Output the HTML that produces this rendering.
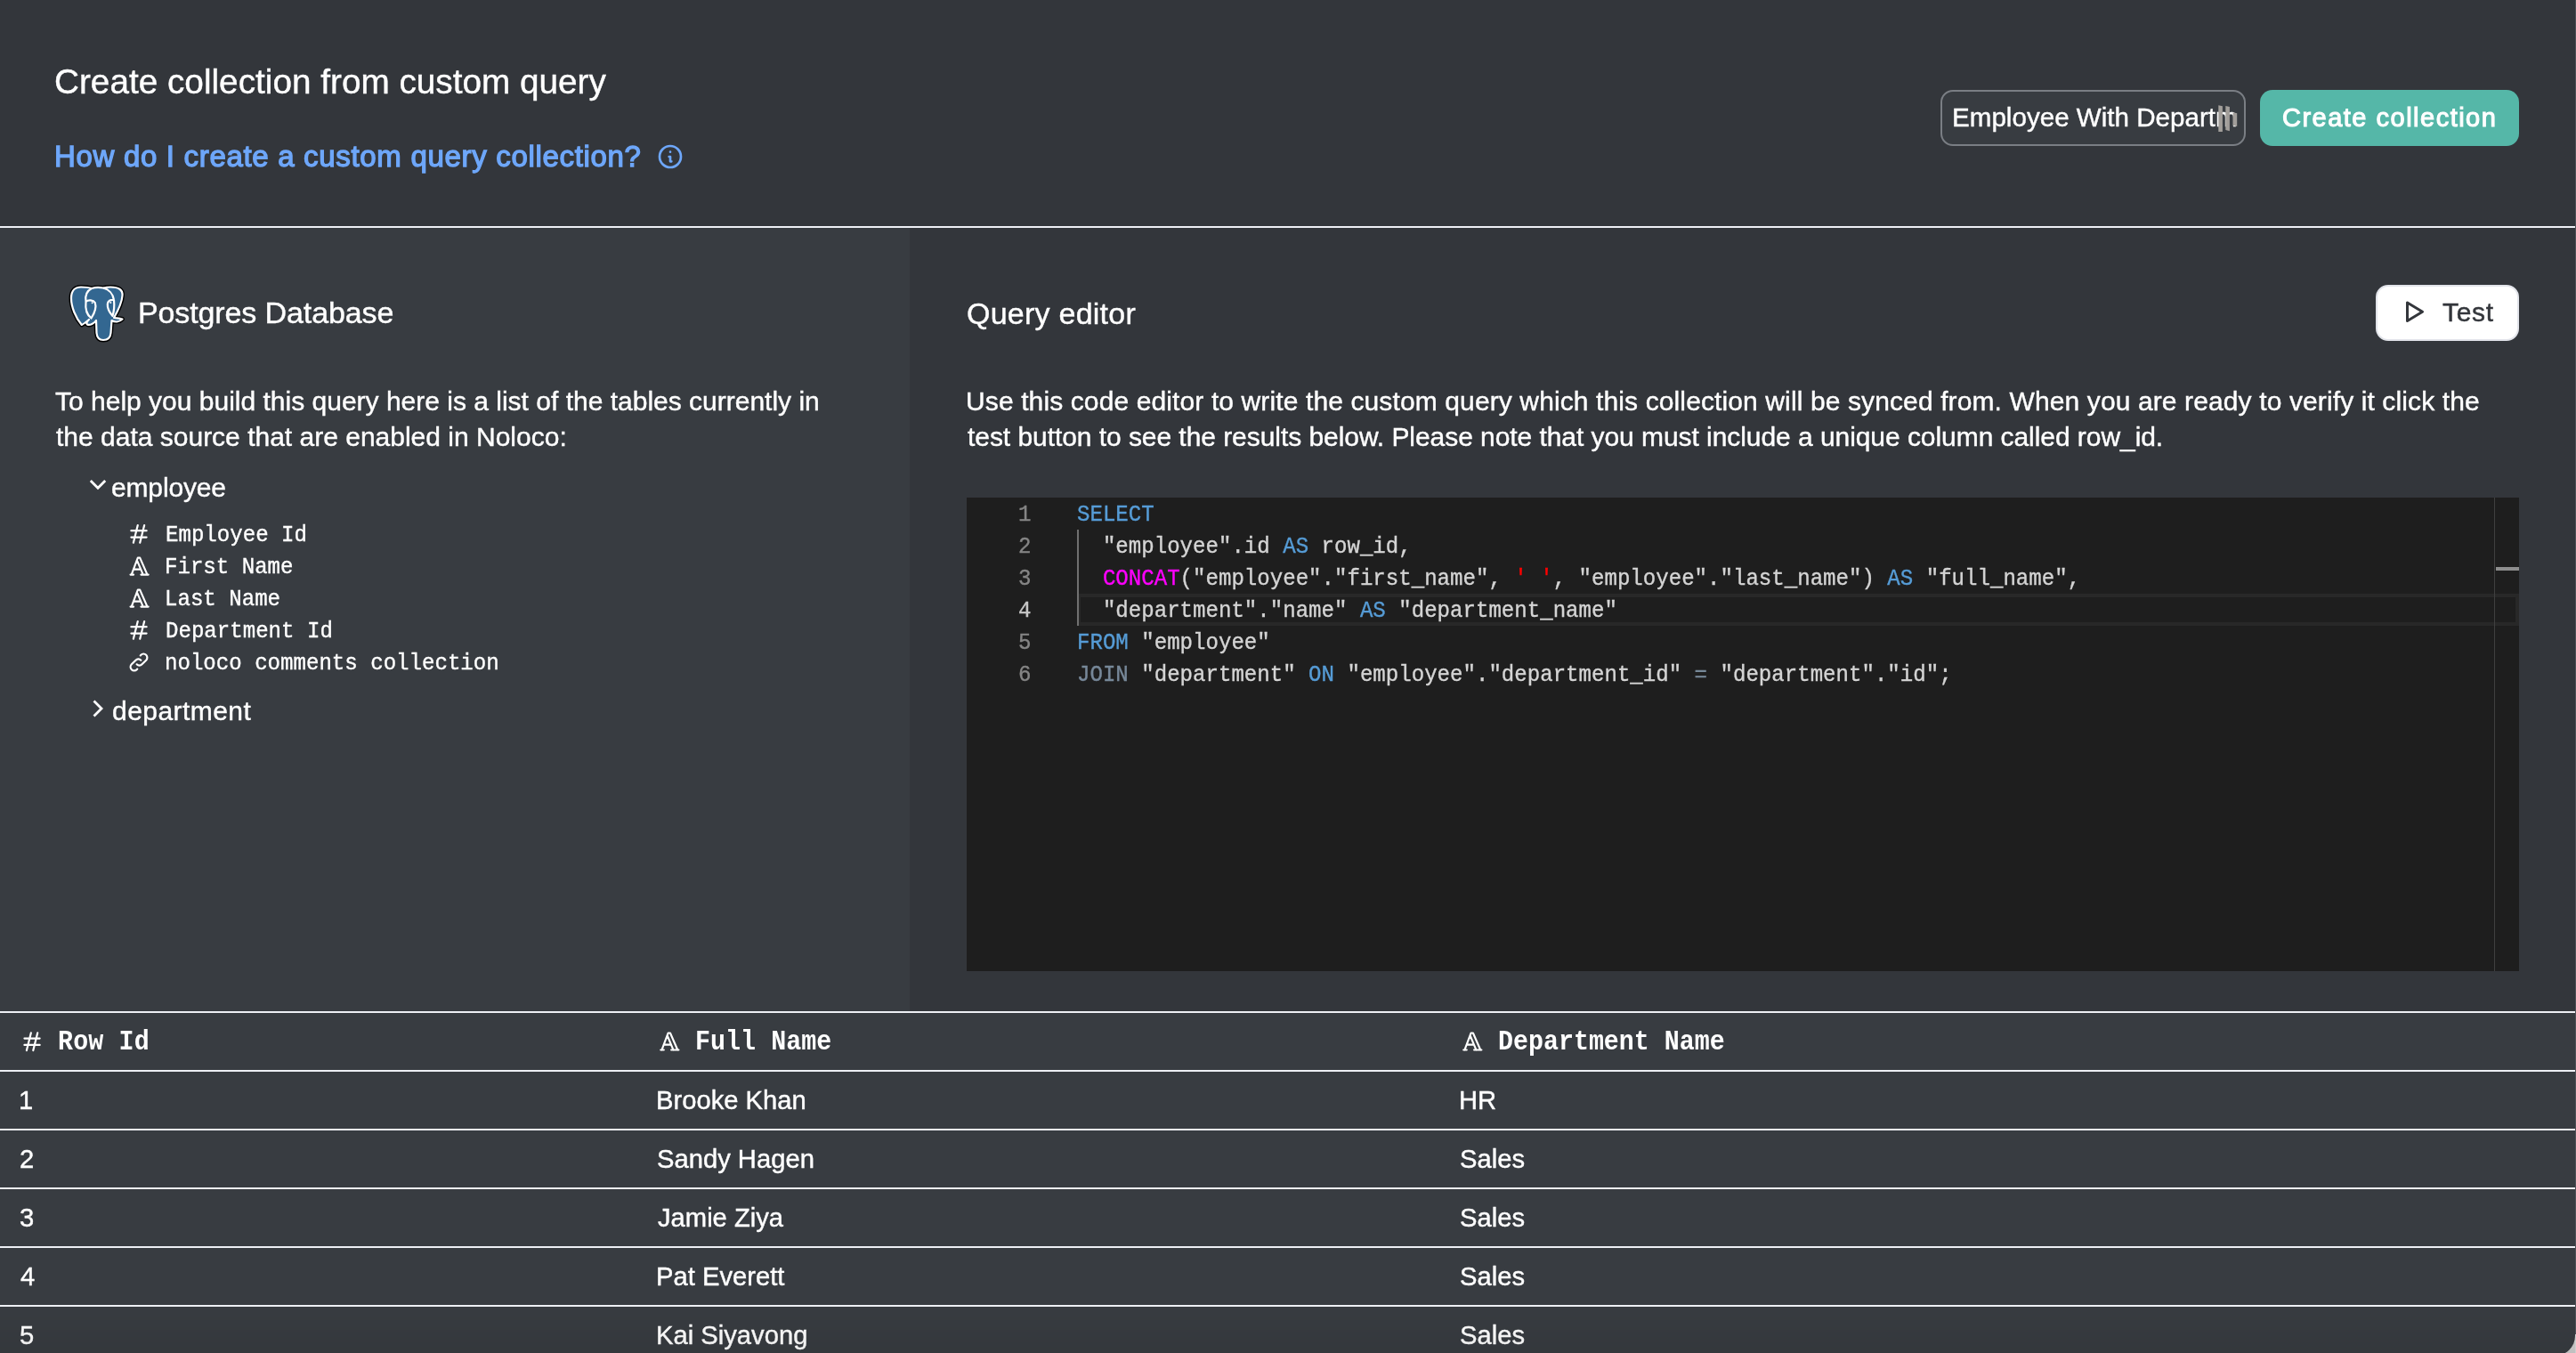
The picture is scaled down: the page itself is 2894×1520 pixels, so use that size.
<!DOCTYPE html>
<html><head><meta charset="utf-8"><title>Create collection from custom query</title>
<style>
html,body{margin:0;padding:0;}
body{width:2894px;height:1520px;position:relative;overflow:hidden;background:#33363b;}
.r{position:absolute;}
.t{position:absolute;white-space:pre;-webkit-font-smoothing:antialiased;will-change:transform;}
.code{font-family:"Liberation Mono", monospace;font-size:24.08px;line-height:36px;color:#d4d4d4;-webkit-text-stroke-width:0.35px;}
</style></head><body>
<div class="r" style="left:0px;top:0px;width:2894px;height:254px;background:#33363b;"></div>
<div class="r" style="left:0px;top:254px;width:2894px;height:2px;background:#eef0f5;"></div>
<div class="r" style="left:0px;top:256px;width:1022px;height:880px;background:#383c41;"></div>
<div class="r" style="left:1022px;top:256px;width:1872px;height:880px;background:#33363b;"></div>
<div class="r" style="left:0px;top:1136px;width:2894px;height:384px;background:#383c41;"></div>
<div class="r" style="left:0px;top:1136px;width:2894px;height:2px;background:#eef0f5;"></div>
<div class="r" style="left:0px;top:1202px;width:2894px;height:2px;background:#eef0f5;"></div>
<div class="r" style="left:0px;top:1268px;width:2894px;height:2px;background:#eef0f5;"></div>
<div class="r" style="left:0px;top:1334px;width:2894px;height:2px;background:#eef0f5;"></div>
<div class="r" style="left:0px;top:1400px;width:2894px;height:2px;background:#eef0f5;"></div>
<div class="r" style="left:0px;top:1466px;width:2894px;height:2px;background:#eef0f5;"></div>
<div class="t" style="left:61.33px;top:67.58px;font-family:'Liberation Sans', sans-serif;font-weight:400;font-size:38.7px;line-height:48px;color:#fff;letter-spacing:0.018px;-webkit-text-stroke:0.4px #fff;">Create collection from custom query</div>
<div class="t" style="left:61.09px;top:155.06px;font-family:'Liberation Sans', sans-serif;font-weight:400;font-size:33px;line-height:41px;color:#6ea7fa;letter-spacing:0.682px;-webkit-text-stroke:1.3px #6ea7fa;">How do I create a custom query collection?</div>
<div class="r" style="left:2180px;top:101px;width:343px;height:63px;background:#383c41;box-sizing:border-box;border:2px solid #7a7e84;border-radius:14px;"></div>
<div class="r" style="left:2182px;top:103px;width:331px;height:59px;overflow:hidden;">
<div class="t" style="left:11.17px;top:10.24px;font-family:'Liberation Sans', sans-serif;font-weight:400;font-size:29.6px;line-height:37px;color:#fff;-webkit-text-stroke:0.4px #fff;">Employee With Department</div>
</div>
<svg class="r" style="left:2488px;top:115px;" width="30" height="36" viewBox="0 0 30 36"><g fill="#a29e9a"><polygon points="4.3,3.3 8.9,4.3 8.9,33 4.3,32.9"/><polygon points="12.3,3.9 16.9,5 16.9,32.2 12.3,31"/><polygon points="20.6,11.3 25.2,12.3 25.2,26.9 20.6,25.9"/></g></svg>
<div class="r" style="left:2539px;top:101px;width:291px;height:63px;background:#55b7a8;border-radius:14px;"></div>
<div class="t" style="left:2564.03px;top:113.95px;font-family:'Liberation Sans', sans-serif;font-weight:400;font-size:29px;line-height:36px;color:#fff;letter-spacing:1.491px;-webkit-text-stroke:1.1px #fff;">Create collection</div>
<div class="t" style="left:155.21px;top:330.41px;font-family:'Liberation Sans', sans-serif;font-weight:400;font-size:34px;line-height:42px;color:#fff;letter-spacing:-0.117px;-webkit-text-stroke:0.4px #fff;">Postgres Database</div>
<div class="t" style="left:62.33px;top:432.40px;font-family:'Liberation Sans', sans-serif;font-weight:400;font-size:30px;line-height:38px;color:#fff;-webkit-text-stroke:0.4px #fff;">To help you build this query here is a list of the tables currently in</div>
<div class="t" style="left:62.55px;top:472.40px;font-family:'Liberation Sans', sans-serif;font-weight:400;font-size:30px;line-height:38px;color:#fff;-webkit-text-stroke:0.4px #fff;">the data source that are enabled in Noloco:</div>
<div class="t" style="left:125.33px;top:528.60px;font-family:'Liberation Sans', sans-serif;font-weight:400;font-size:30px;line-height:38px;color:#fff;letter-spacing:-0.153px;-webkit-text-stroke:0.4px #fff;">employee</div>
<div class="t" style="left:125.64px;top:780.30px;font-family:'Liberation Sans', sans-serif;font-weight:400;font-size:30px;line-height:38px;color:#fff;letter-spacing:0.447px;-webkit-text-stroke:0.4px #fff;">department</div>
<div class="t" style="left:185.60px;top:586.59px;font-family:'Liberation Mono', monospace;font-weight:400;font-size:24.08px;line-height:30px;color:#fff;transform:scaleY(1.09);transform-origin:0 21.41px;-webkit-text-stroke:0.35px #fff;">Employee Id</div>
<div class="t" style="left:185.22px;top:622.59px;font-family:'Liberation Mono', monospace;font-weight:400;font-size:24.08px;line-height:30px;color:#fff;transform:scaleY(1.09);transform-origin:0 21.41px;-webkit-text-stroke:0.35px #fff;">First Name</div>
<div class="t" style="left:184.71px;top:658.59px;font-family:'Liberation Mono', monospace;font-weight:400;font-size:24.08px;line-height:30px;color:#fff;transform:scaleY(1.09);transform-origin:0 21.41px;-webkit-text-stroke:0.35px #fff;">Last Name</div>
<div class="t" style="left:185.60px;top:694.59px;font-family:'Liberation Mono', monospace;font-weight:400;font-size:24.08px;line-height:30px;color:#fff;transform:scaleY(1.09);transform-origin:0 21.41px;-webkit-text-stroke:0.35px #fff;">Department Id</div>
<div class="t" style="left:185.40px;top:730.59px;font-family:'Liberation Mono', monospace;font-weight:400;font-size:24.08px;line-height:30px;color:#fff;transform:scaleY(1.09);transform-origin:0 21.41px;-webkit-text-stroke:0.35px #fff;">noloco comments collection</div>
<div class="t" style="left:1085.79px;top:330.51px;font-family:'Liberation Sans', sans-serif;font-weight:400;font-size:34px;line-height:42px;color:#fff;letter-spacing:0.245px;-webkit-text-stroke:0.4px #fff;">Query editor</div>
<div class="r" style="left:2669px;top:320px;width:161px;height:63px;background:#ffffff;box-sizing:border-box;border:2px solid #e2e4ea;border-radius:14px;"></div>
<div class="t" style="left:2743.83px;top:331.60px;font-family:'Liberation Sans', sans-serif;font-weight:400;font-size:30px;line-height:38px;color:#33363b;letter-spacing:0.683px;-webkit-text-stroke:0.45px #33363b;">Test</div>
<div class="t" style="left:1084.69px;top:432.10px;font-family:'Liberation Sans', sans-serif;font-weight:400;font-size:30px;line-height:38px;color:#fff;letter-spacing:0.115px;-webkit-text-stroke:0.4px #fff;">Use this code editor to write the custom query which this collection will be synced from. When you are ready to verify it click the</div>
<div class="t" style="left:1086.55px;top:472.10px;font-family:'Liberation Sans', sans-serif;font-weight:400;font-size:30px;line-height:38px;color:#fff;letter-spacing:-0.059px;-webkit-text-stroke:0.4px #fff;">test button to see the results below. Please note that you must include a unique column called row_id.</div>
<div class="r" style="left:1086px;top:559px;width:1744px;height:532px;background:#1e1e1e;"></div>
<div class="r" style="left:1210px;top:667px;width:1620px;height:36px;background:transparent;box-sizing:border-box;border:4px solid #282828;border-right-width:4px;"></div>
<div class="r" style="left:1210px;top:595px;width:2px;height:108px;background:#707070;"></div>
<div class="r" style="left:2802px;top:559px;width:1px;height:532px;background:#404040;"></div>
<div class="r" style="left:2804px;top:637px;width:26px;height:4px;background:#8e8e8e;"></div>
<div class="t code" style="left:1210px;top:560.59px;transform:scaleY(1.1);transform-origin:0 24.41px;"><span style="color:#569cd6">SELECT</span></div>
<div class="t code" style="left:1143.71px;top:560.59px;color:#858585;transform:scaleY(1.1);transform-origin:0 24.41px;">1</div>
<div class="t code" style="left:1210px;top:596.59px;transform:scaleY(1.1);transform-origin:0 24.41px;"><span style="color:#d4d4d4">  &quot;employee&quot;.id </span><span style="color:#569cd6">AS</span><span style="color:#d4d4d4"> row_id,</span></div>
<div class="t code" style="left:1144.25px;top:596.59px;color:#858585;transform:scaleY(1.1);transform-origin:0 24.41px;">2</div>
<div class="t code" style="left:1210px;top:632.59px;transform:scaleY(1.1);transform-origin:0 24.41px;"><span style="color:#d4d4d4">  </span><span style="color:#ff00ff">CONCAT</span><span style="color:#d4d4d4">(&quot;employee&quot;.&quot;first_name&quot;, </span><span style="color:#ff0000">&#x27; &#x27;</span><span style="color:#d4d4d4">, &quot;employee&quot;.&quot;last_name&quot;) </span><span style="color:#569cd6">AS</span><span style="color:#d4d4d4"> &quot;full_name&quot;,</span></div>
<div class="t code" style="left:1144.08px;top:632.59px;color:#858585;transform:scaleY(1.1);transform-origin:0 24.41px;">3</div>
<div class="t code" style="left:1210px;top:668.59px;transform:scaleY(1.1);transform-origin:0 24.41px;"><span style="color:#d4d4d4">  &quot;department&quot;.&quot;name&quot; </span><span style="color:#569cd6">AS</span><span style="color:#d4d4d4"> &quot;department_name&quot;</span></div>
<div class="t code" style="left:1143.77px;top:668.59px;color:#c6c6c6;transform:scaleY(1.1);transform-origin:0 24.41px;">4</div>
<div class="t code" style="left:1210px;top:704.59px;transform:scaleY(1.1);transform-origin:0 24.41px;"><span style="color:#569cd6">FROM</span><span style="color:#d4d4d4"> &quot;employee&quot;</span></div>
<div class="t code" style="left:1144.08px;top:704.59px;color:#858585;transform:scaleY(1.1);transform-origin:0 24.41px;">5</div>
<div class="t code" style="left:1210px;top:740.59px;transform:scaleY(1.1);transform-origin:0 24.41px;"><span style="color:#778899">JOIN</span><span style="color:#d4d4d4"> &quot;department&quot; </span><span style="color:#569cd6">ON</span><span style="color:#d4d4d4"> &quot;employee&quot;.&quot;department_id&quot; </span><span style="color:#778899">=</span><span style="color:#d4d4d4"> &quot;department&quot;.&quot;id&quot;;</span></div>
<div class="t code" style="left:1144.11px;top:740.59px;color:#858585;transform:scaleY(1.1);transform-origin:0 24.41px;">6</div>
<div class="t" style="left:64.91px;top:1153.97px;font-family:'Liberation Mono', monospace;font-weight:700;font-size:28.3px;line-height:35px;color:#fff;letter-spacing:0.146px;transform:scaleY(1.1);transform-origin:0 25.03px;">Row Id</div>
<div class="t" style="left:780.79px;top:1153.97px;font-family:'Liberation Mono', monospace;font-weight:700;font-size:28.3px;line-height:35px;color:#fff;letter-spacing:0.056px;transform:scaleY(1.1);transform-origin:0 25.03px;">Full Name</div>
<div class="t" style="left:1683.43px;top:1153.97px;font-family:'Liberation Mono', monospace;font-weight:700;font-size:28.3px;line-height:35px;color:#fff;transform:scaleY(1.1);transform-origin:0 25.03px;">Department Name</div>
<div class="t" style="left:21.28px;top:1217.88px;font-family:'Liberation Sans', sans-serif;font-weight:400;font-size:29.2px;line-height:36px;color:#fff;-webkit-text-stroke:0.4px #fff;">1</div>
<div class="t" style="left:736.60px;top:1217.88px;font-family:'Liberation Sans', sans-serif;font-weight:400;font-size:29.2px;line-height:36px;color:#fff;-webkit-text-stroke:0.4px #fff;">Brooke Khan</div>
<div class="t" style="left:1639.40px;top:1217.88px;font-family:'Liberation Sans', sans-serif;font-weight:400;font-size:29.2px;line-height:36px;color:#fff;-webkit-text-stroke:0.4px #fff;">HR</div>
<div class="t" style="left:22.03px;top:1283.88px;font-family:'Liberation Sans', sans-serif;font-weight:400;font-size:29.2px;line-height:36px;color:#fff;-webkit-text-stroke:0.4px #fff;">2</div>
<div class="t" style="left:737.67px;top:1283.88px;font-family:'Liberation Sans', sans-serif;font-weight:400;font-size:29.2px;line-height:36px;color:#fff;-webkit-text-stroke:0.4px #fff;">Sandy Hagen</div>
<div class="t" style="left:1640.47px;top:1283.88px;font-family:'Liberation Sans', sans-serif;font-weight:400;font-size:29.2px;line-height:36px;color:#fff;-webkit-text-stroke:0.4px #fff;">Sales</div>
<div class="t" style="left:22.39px;top:1349.88px;font-family:'Liberation Sans', sans-serif;font-weight:400;font-size:29.2px;line-height:36px;color:#fff;-webkit-text-stroke:0.4px #fff;">3</div>
<div class="t" style="left:738.54px;top:1349.88px;font-family:'Liberation Sans', sans-serif;font-weight:400;font-size:29.2px;line-height:36px;color:#fff;-webkit-text-stroke:0.4px #fff;">Jamie Ziya</div>
<div class="t" style="left:1640.47px;top:1349.88px;font-family:'Liberation Sans', sans-serif;font-weight:400;font-size:29.2px;line-height:36px;color:#fff;-webkit-text-stroke:0.4px #fff;">Sales</div>
<div class="t" style="left:22.83px;top:1415.88px;font-family:'Liberation Sans', sans-serif;font-weight:400;font-size:29.2px;line-height:36px;color:#fff;-webkit-text-stroke:0.4px #fff;">4</div>
<div class="t" style="left:736.60px;top:1415.88px;font-family:'Liberation Sans', sans-serif;font-weight:400;font-size:29.2px;line-height:36px;color:#fff;-webkit-text-stroke:0.4px #fff;">Pat Everett</div>
<div class="t" style="left:1640.47px;top:1415.88px;font-family:'Liberation Sans', sans-serif;font-weight:400;font-size:29.2px;line-height:36px;color:#fff;-webkit-text-stroke:0.4px #fff;">Sales</div>
<div class="t" style="left:22.33px;top:1481.88px;font-family:'Liberation Sans', sans-serif;font-weight:400;font-size:29.2px;line-height:36px;color:#fff;-webkit-text-stroke:0.4px #fff;">5</div>
<div class="t" style="left:736.60px;top:1481.88px;font-family:'Liberation Sans', sans-serif;font-weight:400;font-size:29.2px;line-height:36px;color:#fff;-webkit-text-stroke:0.4px #fff;">Kai Siyavong</div>
<div class="t" style="left:1640.47px;top:1481.88px;font-family:'Liberation Sans', sans-serif;font-weight:400;font-size:29.2px;line-height:36px;color:#fff;-webkit-text-stroke:0.4px #fff;">Sales</div>
<div class="r" style="left:2853px;top:1480px;width:41px;height:40px;background:#cfcfcf;overflow:hidden;"><div class="r" style="left:0;top:0;width:40px;height:43px;background:#383c41;border-bottom-right-radius:22.4px;"></div></div>
<div class="r" style="left:0px;top:1470px;width:2893px;height:50px;background:linear-gradient(to bottom, rgba(0,0,0,0) 0%, rgba(0,0,0,0.07) 100%);"></div>
<div class="r" style="left:2893px;top:0px;width:1px;height:1499px;background:#4f5257;"></div>
<svg class="r" style="left:0;top:0" width="2894" height="1520" viewBox="0 0 2894 1520"><g transform="translate(141.25,585.10) scale(1.2292)" fill="none" stroke="#fff" stroke-width="1.8" stroke-linecap="round" stroke-linejoin="round"><path d="M5 9h14M5 15h14M11 4l-4 16M17 4l-4 16"/></g><g transform="translate(141.76,621.85) scale(1.1875)" fill="none" stroke="#fff" stroke-width="1.8" stroke-linecap="round" stroke-linejoin="round"><path d="M4 20h3M14 20h7M6.9 15h6.9M10.2 6.3l5.8 13.7M5 20l6-16h2l7 16"/></g><g transform="translate(141.76,657.85) scale(1.1875)" fill="none" stroke="#fff" stroke-width="1.8" stroke-linecap="round" stroke-linejoin="round"><path d="M4 20h3M14 20h7M6.9 15h6.9M10.2 6.3l5.8 13.7M5 20l6-16h2l7 16"/></g><g transform="translate(141.25,693.10) scale(1.2292)" fill="none" stroke="#fff" stroke-width="1.8" stroke-linecap="round" stroke-linejoin="round"><path d="M5 9h14M5 15h14M11 4l-4 16M17 4l-4 16"/></g><g transform="translate(142.00,730.00) scale(1.1667)" fill="none" stroke="#fff" stroke-width="1.9" stroke-linecap="round" stroke-linejoin="round"><path d="M10 14a3.5 3.5 0 0 0 5 0l4-4a3.5 3.5 0 0 0-5-5l-.5.5"/><path d="M14 10a3.5 3.5 0 0 0-5 0l-4 4a3.5 3.5 0 0 0 5 5l.5-.5"/></g><g transform="translate(21.30,1155.50) scale(1.2292)" fill="none" stroke="#fff" stroke-width="1.8" stroke-linecap="round" stroke-linejoin="round"><path d="M5 9h14M5 15h14M11 4l-4 16M17 4l-4 16"/></g><g transform="translate(737.51,1155.80) scale(1.1875)" fill="none" stroke="#fff" stroke-width="1.8" stroke-linecap="round" stroke-linejoin="round"><path d="M4 20h3M14 20h7M6.9 15h6.9M10.2 6.3l5.8 13.7M5 20l6-16h2l7 16"/></g><g transform="translate(1639.46,1155.80) scale(1.1875)" fill="none" stroke="#fff" stroke-width="1.8" stroke-linecap="round" stroke-linejoin="round"><path d="M4 20h3M14 20h7M6.9 15h6.9M10.2 6.3l5.8 13.7M5 20l6-16h2l7 16"/></g><path d="M101.8 540 L110 548.2 L118.2 540" fill="none" stroke="#fff" stroke-width="2.8"/><path d="M105.5 787.5 L114 796 L105.5 804.5" fill="none" stroke="#fff" stroke-width="2.8"/><g transform="translate(737,160) scale(1.3333)" fill="none" stroke="#6ea7fa" stroke-width="2" stroke-linecap="round" stroke-linejoin="round"><circle cx="12" cy="12" r="9"/><path d="M12 8h.01M11 12h1v4h1"/></g><path d="M2704.5 340 L2704.5 360.5 L2721.5 350.2 Z" fill="none" stroke="#33363b" stroke-width="3" stroke-linejoin="round"/><g transform="translate(78,320)"><path d="M13,2.5 C7,2.5 2,6 2,15 C2,25 7,37 13.8,45 C16,44 19,41.5 22,39 C20,41 19,43.5 20,44.5 C23,46 28,43 30,40 L30.5,54 C31,60 34,62 38,62 C43,62 46,60 46.5,54 L47.5,40 C51,42 56,42 59.5,38.5 C56,37.5 52,37.5 50,37 C54,30 59,20 59.5,12 C60,6 56,2.5 46,2.5 C42,2.5 40,3 38,3.5 C33,2.5 28,3 25,4 C21,2.5 17,2.5 13,2.5 Z" fill="none" stroke="#000" stroke-width="5" stroke-linejoin="round"/><path d="M13,2.5 C7,2.5 2,6 2,15 C2,25 7,37 13.8,45 C16,44 19,41.5 22,39 C20,41 19,43.5 20,44.5 C23,46 28,43 30,40 L30.5,54 C31,60 34,62 38,62 C43,62 46,60 46.5,54 L47.5,40 C51,42 56,42 59.5,38.5 C56,37.5 52,37.5 50,37 C54,30 59,20 59.5,12 C60,6 56,2.5 46,2.5 C42,2.5 40,3 38,3.5 C33,2.5 28,3 25,4 C21,2.5 17,2.5 13,2.5 Z" fill="#336791"/><path d="M13,2.5 C7,2.5 2,6 2,15 C2,25 7,37 13.8,45 C16,44 19,41.5 22,39 C20,41 19,43.5 20,44.5 C23,46 28,43 30,40 L30.5,54 C31,60 34,62 38,62 C43,62 46,60 46.5,54 L47.5,40 C51,42 56,42 59.5,38.5 C56,37.5 52,37.5 50,37 C54,30 59,20 59.5,12 C60,6 56,2.5 46,2.5 C42,2.5 40,3 38,3.5 C33,2.5 28,3 25,4 C21,2.5 17,2.5 13,2.5 Z" fill="none" stroke="#fff" stroke-width="2.2" stroke-linejoin="round"/><path d="M25,4 C19,7 17.5,13 18.5,19 M38,3.5 C44,5 49,10 50,17 M18.5,19 C21,16.5 27,17 28.8,20 C30.5,25 28,32 24.5,37.5 C20,34 17.5,28 18.5,19 Z M50,17 C46,16.5 43,18 42.8,21.5 C42.5,26 45,31 48.5,35 C50,30 50.5,22 50,17 Z" fill="none" stroke="#fff" stroke-width="2.2" stroke-linejoin="round"/><circle cx="25.6" cy="20.3" r="1" fill="#fff"/><circle cx="46.3" cy="19.9" r="1" fill="#fff"/></g></svg>
</body></html>
